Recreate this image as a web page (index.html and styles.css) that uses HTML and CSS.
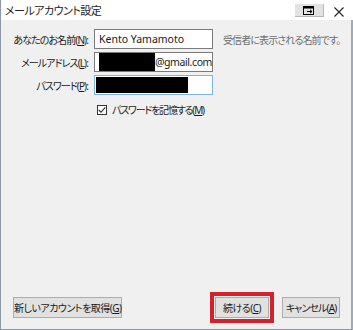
FILE: index.html
```html
<!DOCTYPE html>
<html lang="ja">
<head>
    <meta charset="UTF-8">
    <title>メールアカウント設定</title>
    <link rel="stylesheet" href="styles.css">
</head>
<body>
    <div class="window">
        <div class="titlebar">
            <span class="title">メールアカウント設定</span>
            <span class="title-btn">
                <svg width="12" height="9" viewBox="0 0 12 9">
                    <rect x="0.5" y="0.5" width="10" height="8" fill="none" stroke="#000"/>
                    <rect x="0" y="0" width="11" height="2.5" fill="#000"/>
                    <path d="M4 5.5h5M7 3.8l2 1.7-2 1.7" fill="none" stroke="#000"/>
                </svg>
            </span>
            <span class="close">
                <svg width="10" height="10" viewBox="0 0 10 10">
                    <path d="M0.5 0.5l9 9M9.5 0.5l-9 9" stroke="#222" stroke-width="1.1"/>
                </svg>
            </span>
        </div>

        <div class="content">
            <div class="form">
                <label class="label">あなたのお名前(<u>N</u>):</label>
                <div class="field">Kento Yamamoto</div>
                <span class="hint">受信者に表示される名前です。</span>

                <label class="label">メールアドレス(<u>L</u>):</label>
                <div class="field field-mail"><span class="mask mask-mail"></span>@gmail.com</div>
                <span></span>

                <label class="label">パスワード(<u>P</u>):</label>
                <div class="field field-focus"><span class="mask mask-pass"></span></div>
                <span></span>

                <span></span>
                <div class="check-row">
                    <span class="checkbox">
                        <svg width="8" height="8" viewBox="0 0 8 8">
                            <path d="M0.8 4l2.2 2.3 4.3-5" fill="none" stroke="#222" stroke-width="1.1"/>
                        </svg>
                    </span>
                    <span class="check-label">パスワードを記憶する(<u>M</u>)</span>
                </div>
                <span></span>
            </div>

            <div class="footer">
                <button class="btn btn-new">新しいアカウントを取得(<u>G</u>)</button>
                <button class="btn btn-next">続ける(<u>C</u>)</button>
                <button class="btn btn-cancel">キャンセル(<u>A</u>)</button>
            </div>
        </div>
    </div>
</body>
</html>
```

FILE: styles.css
```css
html, body {
    margin: 0;
    padding: 0;
    background-color: #f0f0f0;
}
body {
    font-family: "Noto Sans", "Noto Sans CJK JP", sans-serif;
    font-size: 10px;
    letter-spacing: -0.5px;
    font-feature-settings: "palt";
    color: #1a1a1a;
}
u {
    text-decoration-thickness: 1px;
    text-underline-offset: 1px;
}
.window {
    width: 353px;
    height: 330px;
    display: flex;
    flex-direction: column;
    box-sizing: border-box;
}
.titlebar {
    height: 20px;
    background-color: #fff;
    display: flex;
    align-items: center;
    border-left: 1px solid #8b98a8;
    padding-left: 4px;
}
.title {
    flex: 1;
    font-size: 11px;
    color: #222;
}
.title-btn {
    width: 28px;
    height: 12px;
    margin-top: 1px;
    background-color: #e3e3e3;
    border-right: 1px solid #b8b8b8;
    border-bottom: 1px solid #b8b8b8;
    display: flex;
    justify-content: center;
    align-items: center;
}
.close {
    width: 29px;
    display: flex;
    justify-content: center;
    align-items: center;
    margin-top: 3px;
}
.content {
    flex: 1;
    display: flex;
    flex-direction: column;
    justify-content: space-between;
    border-left: 1px solid #8b98a8;
    border-right: 2px solid #9eabbb;
    border-bottom: 1px solid #8b98a8;
}
.form {
    display: grid;
    grid-template-columns: 79px 119px auto;
    column-gap: 6px;
    row-gap: 3px;
    padding: 9px 0 0 8px;
    align-items: center;
}
.label {
    text-align: right;
    white-space: nowrap;
    letter-spacing: -0.9px;
}
.field {
    height: 20px;
    box-sizing: border-box;
    background-color: #fff;
    border: 1px solid #7a7a7a;
    display: flex;
    align-items: center;
    padding-left: 4px;
    white-space: nowrap;
    overflow: hidden;
    font-size: 10.5px;
    letter-spacing: 0;
}
.field-mail {
    letter-spacing: -0.4px;
}
.field-focus {
    border-color: #7eb4ea;
    padding-left: 1px;
}
.mask {
    display: inline-block;
    background-color: #000;
}
.mask-mail {
    width: 58px;
    height: 18px;
}
.mask-pass {
    width: 92px;
    height: 16px;
}
.hint {
    color: #6d6d6d;
    margin-left: 4px;
    white-space: nowrap;
    letter-spacing: -0.9px;
}
.check-row {
    display: flex;
    align-items: center;
    gap: 5px;
    padding: 4px 0 0 3px;
    white-space: nowrap;
}
.check-label {
    letter-spacing: -1.2px;
}
.checkbox {
    width: 10px;
    height: 10px;
    box-sizing: border-box;
    border: 1px solid #333;
    background-color: #fff;
    display: flex;
    justify-content: center;
    align-items: center;
}
.footer {
    display: flex;
    align-items: center;
    padding: 0 11px 11px 12px;
}
.btn {
    height: 21px;
    box-sizing: border-box;
    background-color: #e1e1e1;
    border: 1px solid #adadad;
    font-family: inherit;
    font-size: 10px;
    letter-spacing: -0.5px;
    font-feature-settings: "palt";
    color: #1a1a1a;
    padding: 0;
    white-space: nowrap;
    text-align: center;
}
.btn-new {
    width: 109px;
}
.btn-next {
    margin-left: auto;
    margin-right: 13px;
    width: 54px;
    outline: 4px solid #d2232c;
    outline-offset: 1px;
}
.btn-cancel {
    width: 58px;
    letter-spacing: -0.9px;
}
```
